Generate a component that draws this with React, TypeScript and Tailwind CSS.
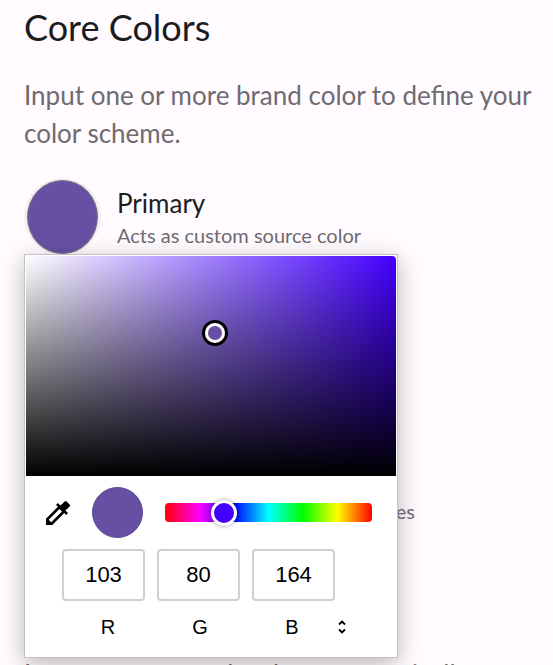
import { useState } from 'react';
import { MdColorize } from 'react-icons/md';

const roles = [
	{ name: 'Primary', description: 'Acts as custom source color', color: 'bg-[#6750a4]' },
	{ name: 'Secondary', description: 'For less prominent parts', color: 'bg-[#625b71]' },
	{ name: 'Tertiary', description: 'For contrasting accents', color: 'bg-[#7d5260]' },
	{ name: 'Neutral', description: 'Used for background and surfaces', color: 'bg-[#605d62]' },
];

const channels = [
	{ label: 'R', value: 103 },
	{ label: 'G', value: 80 },
	{ label: 'B', value: 164 },
];

function ColorPicker() {
	const [hue, setHue] = useState(258);

	return (
		<div
			role="dialog"
			aria-label="Color picker"
			className="absolute top-[76px] left-0 w-[374px] border border-[#c4c0c6] bg-white p-px pb-4 font-['Liberation_Sans',sans-serif] text-black shadow-[0_6px_22px_rgba(0,0,0,0.28)]"
		>
			<div
				className="relative h-[220px] rounded-tr bg-[linear-gradient(to_top,#000,transparent),linear-gradient(to_right,#fff,transparent)]"
				style={{ backgroundColor: `hsl(${hue - 2} 100% 50%)` }}
			>
				<div className="absolute top-[35%] left-[51%] size-[26px] -translate-x-1/2 -translate-y-1/2 rounded-full border-3 border-black bg-[#6750a4]">
					<div className="size-full rounded-full border-3 border-white" />
				</div>
			</div>

			<div className="flex items-center pt-[11px] pr-6 pl-4">
				<button type="button" aria-label="Pick from screen">
					<MdColorize className="size-8" />
				</button>
				<div className="ml-[18px] size-[51px] rounded-full border border-[#5a4690] bg-[#6750a4]" />
				<div className="relative ml-[22px] h-[19px] flex-1 rounded bg-[linear-gradient(to_right,#f00,#f0f,#00f,#0ff,#0f0,#ff0,#f00)]">
					<input
						type="range"
						aria-label="Hue"
						min={0}
						max={360}
						value={360 - hue}
						onChange={(e) => setHue(360 - Number(e.target.value))}
						className="absolute inset-y-0 -left-[13px] w-[calc(100%+26px)] appearance-none bg-transparent [&::-webkit-slider-thumb]:size-[26px] [&::-webkit-slider-thumb]:appearance-none [&::-webkit-slider-thumb]:rounded-full [&::-webkit-slider-thumb]:border-3 [&::-webkit-slider-thumb]:border-white [&::-webkit-slider-thumb]:bg-[#4300ff] [&::-webkit-slider-thumb]:shadow-[0_0_4px_rgba(0,0,0,0.4)]"
					/>
				</div>
			</div>

			<div className="mt-[11px] ml-9 flex gap-3">
				{channels.map((c) => (
					<input
						key={c.label}
						id={`channel-${c.label}`}
						type="text"
						defaultValue={c.value}
						className="h-[52px] w-[83px] rounded border-2 border-[#cfcfcf] text-center text-[22px]"
					/>
				))}
			</div>
			<div className="mt-3 ml-9 flex h-7 items-center text-xl">
				{channels.map((c) => (
					<label key={c.label} htmlFor={`channel-${c.label}`} className="w-[92px] text-center">
						{c.label}
					</label>
				))}
				<button type="button" aria-label="Change color format">
					<svg viewBox="0 0 8 14" className="h-[14px] w-2" fill="none" stroke="currentColor" strokeWidth="1.8">
						<path d="M1 4.5l3-3 3 3M1 9.5l3 3 3-3" />
					</svg>
				</button>
			</div>
		</div>
	);
}

export default function App() {
	return (
		<main className="h-screen overflow-hidden bg-[#fffbff] pt-1 pr-3 pl-6 font-['Lato',sans-serif] text-[#1c1b1f]">
			<h1 className="text-4xl leading-[46px]">Core Colors</h1>
			<p className="mt-[26px] text-[26px] leading-[38px] text-[#6f6b70]">
				Input one or more brand color to define your color scheme.
			</p>

			<div className="relative mt-[26px]">
				<ul className="flex flex-col gap-[15px]">
					{roles.map((role) => (
						<li key={role.name} className="flex items-center">
							<button
								type="button"
								aria-label={role.name}
								className="flex size-[77px] items-center justify-center rounded-full bg-[#f1eff3]"
							>
								<span className={`h-[74px] w-[71px] rounded-[50%] border border-[#77747c] ${role.color}`} />
							</button>
							<div className="ml-4">
								<h2 className="text-[26px] leading-9">{role.name}</h2>
								<p className="text-xl leading-7 text-[#6f6b70]">{role.description}</p>
							</div>
						</li>
					))}
				</ul>
				<ColorPicker />
			</div>

			<p className="mt-[124px] text-[26px] leading-[38px] text-[#6f6b70]">
				Input a custom color that automatically
			</p>
		</main>
	);
}
